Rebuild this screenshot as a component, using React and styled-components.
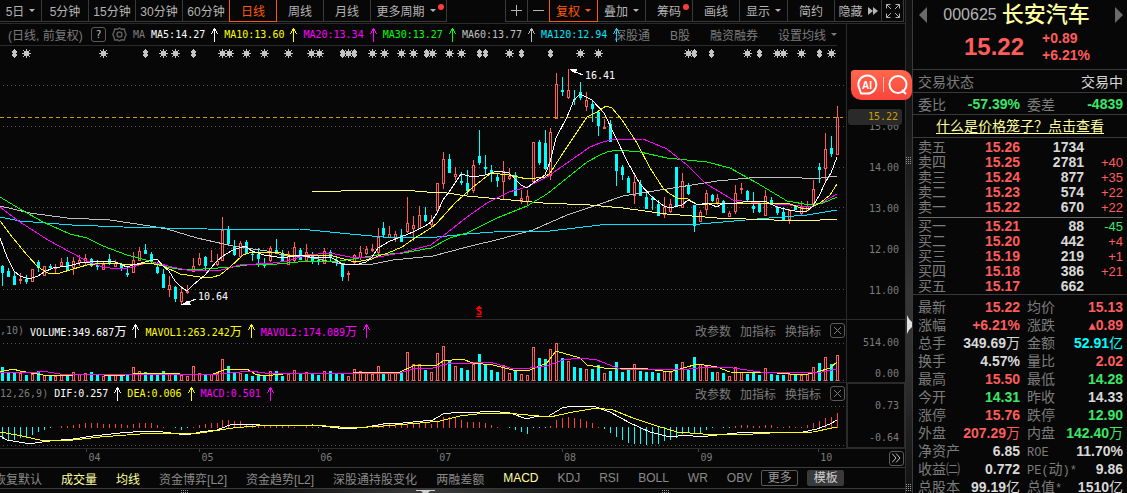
import React from "react";
import styled, { createGlobalStyle, css } from "styled-components";

/* ---------- theme values ---------- */
const C = {
  bg: "#070707",
  line: "#3a3a3a",
  faint: "#2b2b2b",
  text: "#b4b4b4",
  dim: "#7c7c7c",
  red: "#ff5c5c",
  green: "#3ce668",
  cyan: "#00ffff",
  white: "#d8d8d8",
  orange: "#ff5a0a",
  cream: "#ffffa0",
  gold: "#c8a000",
};
const SANS = '"Liberation Sans", "Noto Sans CJK SC", sans-serif';
const MONO = '"DejaVu Sans Mono", "Noto Sans CJK SC", monospace';

const Global = createGlobalStyle`
  * { box-sizing: border-box; }
  body { margin: 0; background: ${C.bg}; font-family: ${SANS}; font-size: 12px; }
  button { font: inherit; color: inherit; background: none; border: 0; padding: 0; margin: 0; white-space: nowrap; cursor: pointer; }
  svg { display: block; }
`;

/* ---------- series data ---------- */
const PLOT_W = 846;
const barX = (i) => Math.floor(2.3 + i * 5.964);

const CANDLE_BLOCKS = [
  [180, `d255,258,278,318 d265,273,288,292 d276,290,312,316 u280,298,301,312 d286,299,303,314 u267,267,304,305 d240,248,262,276 u258,258,286,290 d252,260,262,267 u252,263,265,280
  u234,248,257,260 d232,246,270,270 u233,245,263,285 u225,240,248,258 u222,235,246,260 d235,238,256,262 d240,255,258,270 u248,252,268,270 d224,237,248,255 u242,250,259,262
  d250,252,262,275 d262,280,284,293 u218,240,278,280 u202,213,242,245 d193,210,221,224 d218,222,244,250 d248,262,276,282 d268,282,323,324 u288,315,328,352 d320,322,356,368
  u320,336,364,372 u316,334,338,342 u235,260,273,278 u220,235,253,260 d228,232,256,270 u212,243,245,247 u222,245,252,258 u112,150,242,245 d138,150,191,191 d180,198,223,228
  u185,189,229,232 d180,187,220,224 d212,222,224,245 d205,222,236,262 d236,254,257,265 u198,205,240,248 d178,212,216,222 d210,222,240,247 u215,222,252,257 u186,203,240,248
  d206,210,238,240 u192,217,240,245`],
  [100, `d458,465,480,492 d465,480,484,497 u444,455,490,492 d452,456,470,485 d468,480,488,498 d492,494,530,545 u515,519,524,545 u462,465,487,492 u438,458,472,480 u440,448,460,465
  u432,447,452,458 u384,412,458,462 d366,384,404,412 u378,402,411,415 u394,402,414,428 d388,406,423,425 u292,370,395,400 u348,375,386,425 u318,346,384,388 d321,345,360,368
  u345,361,374,384 u250,250,332,335 u158,178,250,268 d162,177,218,220 u202,222,230,242 d216,243,248,255 d210,250,270,285 u180,196,272,280 d90,168,186,195 d165,202,206,222
  d195,212,218,246 d222,231,242,262 u183,214,245,298 u204,228,236,242 d216,226,287,290 u270,294,303,312 u270,290,305,315 u127,127,245,246 d120,126,188,195 d90,130,206,212
  u84,97,227,242`],
  [60, `u39,73,175,177 d52,90,95,110 u27,90,113,117 d90,117,119,137 d66,96,113,122 u98,122,140,153 d125,132,144,188 d155,158,197,228 u177,203,206,209 d180,194,245,248
  d283,283,332,378 d315,322,342,360 d350,354,397,399 u345,366,407,434 d360,374,406,408 d398,412,446,447 d410,414,419,452 d422,432,465,468 u411,441,462,476 u417,433,455,461
  d321,321,437,438 u339,364,443,446 d370,375,399,405 d435,435,497,518 u450,457,485,487 u390,400,447,465 d402,407,420,427 u402,414,427,435 d422,424,456,459 u453,459,470,473
  u375,399,455,464 u369,384,388,402 d390,394,418,425 d396,440,444,459 d428,431,453,459 u390,408,466,468 d411,420,434,437 d438,442,458,465 d443,456,477,480 u448,451,479,492
  d435,440,447,450 u425,443,460,468 u423,440,450,455 u360,387,430,440 d309,321,329,369 u219,267,326,370 d228,264,279,293 u138,171,284,285`],
];

/* Each block holds offsets in thirds of a pixel below its base line. */
const CANDLES = CANDLE_BLOCKS.flatMap(([base, rows]) =>
  rows.trim().split(/\s+/).map((s) => {
    const [high, top, bottom, low] = s.slice(1).split(",").map((v) => base + Math.floor(Number(v) / 3));
    return { up: s[0] === "u", high, top, bottom, low };
  })
);

const VOLUME = `158 172 173 175 180 178 170 180 182 183 178 180 172 178 174 171 180 183 178 181 180 180 156 168 172 180 178 170 176 178 180 183 153 174 180 178 175 132
153 174 174 178 183 178 180 168 170 183 178 166 176 172 178 180 168 168 175 175 183 162 168 175 178 153 173 175 175 175 112 147 147 165 171 115 93 136
155 161 166 147 118 152 165 171 152 174 168 177 180 97 129 132 103 85 129 139 156 159 162 162 150 174 168 141 171 165 147 168 171 171 174 168 171 147
141 165 126 147 153 171 171 174 183 156 171 177 171 180 159 177 180 180 177 180 180 177 156 144 126 147 121`
  .trim().split(/\s+/).map((v) => 315 + Math.floor(Number(v) / 3));

const MACD = `372 375 375 370 368 360 353 347 341 0 333 333 330 327 324 324 324 327 327 327 327 330 327 324 324 324 330 336 0 341 345 341 336 330 327 324 324 315
315 318 320 327 328 330 332 334 334 334 333 336 0 335 336 341 0 0 341 344 344 341 0 334 334 332 328 327 327 327 325 324 324 324 327 318 306 308
309 315 321 321 321 324 330 336 0 339 347 353 357 341 339 339 333 315 309 306 309 312 318 324 336 342 354 366 375 384 387 387 392 387 387 380 375 369
357 354 357 354 345 341 0 339 339 335 330 330 333 333 330 332 336 336 334 336 336 332 326 318 309 306 294`
  .trim().split(/\s+/).map(Number);

const PRICE_LINES = [
  ["#c0c0c0", "0,206 30,213 67,218 110,220 150,226 167,229 197,238 233,246 267,251 287,256 308,257 337,263 353,265 373,264 393,260 433,256 467,247 500,239 533,230 567,215 600,204 623,196 673,188 717,181 760,177 790,177 813,179 837,176"],
  ["#00e5ff", "0,217 20,221 72,225 123,227 207,229 267,230 300,229 320,231 350,234 383,237 437,237 467,234 507,231 550,231 600,225 610,224 700,224 757,219 807,215 837,210"],
  ["#ffff80", "312,192 370,190 403,190 427,192 447,193 467,196 500,199 543,203 590,205 623,208 667,214 717,218 803,221 837,219"],
  ["#00ff00", "0,197 20,209 43,222 70,234 87,238 103,246 127,255 150,261 167,267 183,270 203,269 233,267 247,265 277,264 308,261 333,262 353,259 377,255 403,253 431,248 450,238 467,233 497,218 527,206 547,194 567,178 587,162 600,155 607,152 617,150 640,152 667,158 707,162 730,168 757,183 787,201 810,205 823,203 837,197"],
  ["#ff00ff", "0,207 20,222 48,240 70,252 87,261 103,267 117,269 128,268 143,264 157,263 172,267 187,270 217,271 240,265 273,263 288,261 306,255 330,253 350,257 373,258 400,253 431,245 443,236 467,217 487,203 509,192 527,187 547,177 567,163 590,147 600,143 610,140 643,139 667,149 687,165 705,183 733,200 760,203 790,205 810,207 823,202 837,194"],
  ["#ffff00", "0,221 13,238 27,255 38,267 48,273 60,273 73,269 87,265 103,263 122,264 133,265 150,263 163,266 180,274 200,277 213,277 220,275 230,267 243,255 252,252 277,252 288,255 308,255 333,256 355,262 372,259 378,256 388,253 402,247 415,238 431,228 437,223 455,203 473,187 491,173 509,175 527,179 545,177 550,173 567,147 577,132 587,117 597,112 606,106 612,108 622,120 637,143 650,168 663,188 670,194 677,198 688,199 698,205 717,203 770,203 790,204 801,208 810,208 820,203 830,195 837,184"],
  ["#ffffff", "0,238 7,257 14,271 20,276 26,278 32,278 38,276 44,272 53,268 60,267 68,266 80,263 90,262 100,261 115,262 127,267 133,265 145,262 157,259 163,266 169,271 175,281 181,287 187,291 193,285 205,275 217,261 223,256 233,250 245,246 252,251 264,255 277,257 288,257 300,255 310,257 330,257 336,260 342,264 355,265 366,262 372,257 378,248 390,241 401,237 413,232 425,226 431,222 437,213 443,200 449,192 455,183 461,174 473,177 485,175 497,171 509,173 515,179 521,185 527,188 533,183 539,179 545,175 550,162 556,138 567,117 574,100 580,94 592,100 604,113 616,138 628,163 640,184 652,197 664,206 670,208 682,205 688,200 698,205 707,203 717,207 723,203 737,203 750,201 765,201 777,207 789,210 801,212 807,211 813,206 819,196 825,183 831,173 837,157"],
];

const VOLUME_LINES = [
  ["#ffff00", "0,372 13,369 20,371 43,375 73,375 90,374 117,376 133,374 157,373 180,374 213,374 227,369 247,369 255,374 263,376 283,374 310,373 353,373 377,372 400,372 413,366 437,365 443,361 462,359 473,363 493,365 517,371 530,370 547,363 556,351 580,358 587,365 610,369 640,368 670,372 683,368 698,364 717,367 730,372 777,373 803,375 817,372 830,368 837,362"],
  ["#ff00ff", "0,372 35,373 42,371 60,374 150,375 220,374 250,371 265,373 300,373 400,373 413,369 433,368 450,363 473,363 490,362 510,368 530,368 547,366 563,360 580,358 597,360 620,369 680,370 707,367 733,368 760,372 817,373 837,369"],
];

const MACD_LINES = [
  ["#ffffff", "0,436 7,440 25,443 35,443 50,441 73,439 93,436 120,433 147,431 163,432 187,435 200,432 217,430 230,425 253,424 267,426 313,425 347,429 367,427 383,424 403,423 413,422 433,420 443,414 460,412 470,413 490,411 510,413 527,419 537,416 547,417 562,408 573,406 593,406 610,412 630,423 650,432 670,437 687,435 699,437 717,435 747,432 803,432 817,429 830,424 837,420"],
  ["#ffff00", "0,432 17,435 40,440 73,440 100,437 140,434 160,433 200,433 233,428 267,425 313,425 353,428 383,426 420,423 440,421 460,416 477,414 497,413 517,414 550,417 573,412 597,408 613,410 633,418 657,426 677,432 703,434 737,435 770,433 813,432 837,427"],
];

const SUNS = [26, 103, 163, 175, 222, 229, 246, 264, 288, 311, 319, 348, 372, 384, 401, 413, 432, 449, 461, 509, 580, 598, 688, 747, 777, 783, 801, 831];
const SPINDLES = [14, 145, 193, 342, 354, 426, 479, 485, 521, 550, 694, 711, 759, 819];

/* ---------- page frame ---------- */
const Page = styled.div`
  display: flex;
  height: 100vh;
  overflow: hidden;
  color: ${C.text};
  background: ${C.bg};
`;
const Workspace = styled.main`
  flex: 1;
  min-width: 0;
  display: flex;
  flex-direction: column;
`;

/* ---------- toolbar ---------- */
const Toolbar = styled.nav`
  display: flex;
  justify-content: space-between;
  padding-right: 1px;
  height: 23px;
  flex: none;
`;
const ToolGroup = styled.div`
  display: flex;
  height: 22px;
`;
const ToolButton = styled.button`
  && {
    position: relative;
    flex: none;
    display: flex;
    align-items: center;
    justify-content: center;
    gap: 5px;
    width: ${(p) => p.$w || 47}px;
    padding-right: ${(p) => p.$inset || 0}px;
    border: solid ${C.line};
    border-width: 0 1px 1px ${(p) => (p.$first ? 1 : 0)}px;
    color: ${C.text};
    ${(p) =>
      p.$active &&
      css`
        border: 1px solid ${C.orange};
        border-top-width: 0;
        color: ${C.orange};
        margin-left: -1px;
      `}
  }
`;
const Caret = styled.span`
  width: 0;
  height: 0;
  border: 3px solid transparent;
  border-top-color: currentColor;
  border-bottom-width: 0;
`;
const Dot = styled.i`
  position: absolute;
  top: 4px;
  right: ${(p) => p.$right}px;
  width: 6px;
  height: 6px;
  border-radius: 50%;
  background: #ff3c3c;
`;

/* ---------- chart panels ---------- */
const Panel = styled.section`
  flex: none;
  display: grid;
  grid-template-columns: minmax(0, 1fr) 59px;
  border-top: 1px solid ${C.faint};
`;
const Plot = styled.div`
  position: relative;
  min-width: 0;
`;
const Legend = styled.header`
  display: flex;
  align-items: center;
  height: 22px;
  padding-right: ${(p) => (p.$ruled ? 0 : 1)}px;
  padding-bottom: ${(p) => (p.$ruled ? 0 : 1)}px;
  margin-right: ${(p) => (p.$ruled ? 9 : 0)}px;
  border-bottom: ${(p) => (p.$ruled ? `1px solid ${C.faint}` : "0")};
  color: ${C.dim};
`;
const Readings = styled.div`
  flex: 1;
  min-width: 0;
  display: flex;
  align-items: center;
  gap: 6px;
  white-space: nowrap;
  font-family: ${MONO};
  font-size: 10px;
`;
const Reading = styled.span`
  display: flex;
  flex: none;
  align-items: center;
  gap: 6px;
  color: ${(p) => p.$color};
`;
const Cjk = styled.span`
  font-size: 12px;
`;
const LegendTitle = styled.span`
  flex: none;
  padding-left: ${(p) => (p.$indent ? 8 : 0)}px;
  min-width: ${(p) => (p.$indent ? 85 : 0)}px;
  font-size: ${(p) => (p.$indent ? 12 : 10)}px;
  font-family: ${(p) => (p.$indent ? SANS : MONO)};
`;
const IconButton = styled.button`
  && {
    width: 15px;
    height: 15px;
    flex: none;
    display: grid;
    place-items: center;
    border: ${(p) => (p.$bare ? "0" : "1px solid #5a5a5a")};
    border-radius: 3px;
    color: ${(p) => p.$color || C.dim};
  }
`;
const LegendActions = styled.div`
  flex: none;
  display: flex;
  align-items: center;
  gap: ${(p) => p.$gap}px;
`;
const CaretButton = styled.button`
  && {
    display: flex;
    align-items: center;
    gap: 5px;
  }
`;
const Axis = styled.div`
  position: relative;
  display: flex;
  flex-direction: column;
  padding: ${(p) => p.$pad};
  justify-content: ${(p) => (p.$spread ? "space-between" : "flex-start")};
  border-left: 1px solid ${C.faint};
  ${(p) => p.$boxed && css`box-shadow: inset 0 0 0 1px ${C.faint};`}
  font-family: ${MONO};
  font-size: 10px;
  text-align: right;
  color: ${C.dim};
`;
const AxisLabel = styled.span`
  height: ${(p) => p.$h}px;
  line-height: ${(p) => p.$h}px;
`;
const PriceTag = styled.output`
  position: absolute;
  top: 85px;
  left: 1px;
  right: 3px;
  height: 16px;
  padding-right: 4px;
  line-height: 16px;
  border-radius: 3px;
  background: #2a2a2a;
  color: ${C.gold};
`;
const PointLabel = styled.span`
  position: absolute;
  left: ${(p) => (p.$x / PLOT_W) * 100}%;
  top: ${(p) => p.$y}px;
  font-family: ${MONO};
  font-size: 10px;
  line-height: 12px;
  color: ${(p) => p.$color || "#fff"};
  font-weight: ${(p) => (p.$bold ? 700 : 400)};
`;
const Assistant = styled.button`
  && {
    position: absolute;
    top: 46px;
    left: 4px;
    width: 61px;
    height: 30px;
    z-index: 2;
    display: flex;
    align-items: center;
    justify-content: center;
    border-radius: 3px 10px 8px 10px;
    background: linear-gradient(#ff684c, #fb443c);
  }
`;

/* ---------- time axis and tabs ---------- */
const TimeAxis = styled.div`
  flex: none;
  display: flex;
  align-items: center;
  height: 19px;
  border-top: 1px solid ${C.faint};
  padding-right: 1px;
`;
const Month = styled.span`
  position: relative;
  flex: ${(p) => p.$days} 1 0;
  padding-left: 2px;
  font-family: ${MONO};
  font-size: 10px;
  line-height: 18px;
  color: ${C.dim};
  ${(p) =>
    p.$tick &&
    css`
      &::before {
        content: "";
        position: absolute;
        left: 0;
        top: 0;
        width: 1px;
        height: 3px;
        background: #444;
      }
    `}
`;
const Tabs = styled.nav`
  flex: none;
  display: flex;
  align-items: center;
  gap: 19px;
  height: 21px;
  overflow: hidden;
  border-top: 1px solid ${C.line};
  color: #8a8a8a;
`;
const Tab = styled.button`
  && {
    flex: none;
    color: ${(p) => (p.$on ? C.cream : "inherit")};
    margin-left: ${(p) => (p.$clipped ? -6 : 0)}px;
  }
`;
const TabActions = styled.div`
  display: flex;
  gap: 9px;
  margin-left: -10px;
`;
const SmallButton = styled.button`
  && {
    width: 37px;
    height: 16px;
    line-height: 14px;
    border: 1px solid ${(p) => (p.$filled ? "#3a3a3a" : "#5a5a5a")};
    border-radius: 2px;
    background: ${(p) => (p.$filled ? "#3a3a3a" : "none")};
    color: ${(p) => (p.$filled ? "#d0d0d0" : "#9a9a9a")};
  }
`;
const Drawer = styled.div`
  flex: 1;
  display: flex;
  align-items: flex-start;
  justify-content: space-between;
  padding: 1px 26% 0 20%;
  border-top: 1px solid ${C.line};
  background: linear-gradient(90deg, #0a0a0a 28%, #3c3c3c 47%, #0a0a0a 70%);
`;

/* ---------- divider ---------- */
const Divider = styled.div`
  flex: none;
  width: 7px;
  display: flex;
  flex-direction: column;
  justify-content: space-between;
  align-items: center;
  padding: 157px 0 1px;
  border-left: 1px solid #303030;
  background: linear-gradient(#101010, #161616 25%, #363636 60%, #303030 75%, #101010);
`;

/* ---------- quote panel ---------- */
const Quote = styled.aside`
  flex: none;
  width: 215px;
  overflow: hidden;
  border-left: 1px solid ${C.line};
`;
const QuoteHead = styled.header`
  height: 69px;
  padding: 0 4px 0 6px;
`;
const NameRow = styled.div`
  display: flex;
  align-items: center;
  justify-content: space-between;
  height: 30px;
`;
const Title = styled.h1`
  display: flex;
  align-items: center;
  gap: 5px;
  margin: 0;
  padding-right: 9px;
  font-size: 22px;
  line-height: 30px;
  font-weight: 500;
  color: ${C.cream};
`;
const Code = styled.span`
  font-size: 16px;
  font-weight: 400;
  color: ${C.text};
`;
const PriceRow = styled.div`
  display: flex;
  align-items: center;
  gap: 18px;
  padding-left: 45px;
  color: ${C.red};
  font-weight: 700;
`;
const Price = styled.strong`
  font-size: 24px;
  line-height: 32px;
`;
const Change = styled.div`
  font-size: 14px;
  line-height: 17px;
`;
const Section = styled.section`
  border-top: 1px solid ${C.line};
  padding: ${(p) => p.$pad || "0 4px 0 5px"};
`;
const Line = styled.div`
  display: grid;
  grid-template-columns: 28px 1fr 35px 68px;
  align-items: center;
  height: ${(p) => p.$h}px;
  font-size: 14px;
`;
const StateLine = styled(Line)`
  grid-template-columns: 1fr auto;
`;
const Label = styled.span`
  color: ${C.dim};
  white-space: nowrap;
  padding-left: ${(p) => (p.$second ? 7 : 0)}px;
`;
const Value = styled.span`
  text-align: right;
  font-weight: ${(p) => (p.$plain ? 400 : 700)};
  color: ${(p) => p.$color || C.white};
`;
const HelpLine = styled.div`
  height: 22px;
  line-height: 22px;
  text-align: center;
  font-size: 14px;
  padding-right: 1px;
`;
const HelpLink = styled.a`
  color: ${C.cream};
  text-decoration: underline;
  text-underline-offset: 2px;
`;
const DataTable = styled.table`
  display: block;
  border-collapse: collapse;
  font-size: 14px;
  tbody {
    display: block;
  }
  tr {
    display: grid;
    align-items: center;
    grid-template-columns: ${(p) => p.$cols};
    height: ${(p) => p.$row}px;
    line-height: ${(p) => p.$row}px;
  }
`;
const Th = styled.th`
  padding: 0 0 0 ${(p) => (p.$second ? 7 : 0)}px;
  font-weight: 400;
  text-align: left;
  white-space: nowrap;
  color: ${C.dim};
`;
const Td = styled.td`
  padding: 0;
  font-weight: 700;
  text-align: right;
  white-space: nowrap;
  color: ${(p) => p.$color || C.white};
`;
const Delta = styled(Td)`
  font-size: 13px;
  font-weight: 400;
`;
const Unit = styled.span`
  font-weight: 400;
`;
const Latin = styled.span`
  font: 12px "Liberation Mono", monospace;
`;
const Rule = styled.hr`
  height: 1px;
  margin: 2px 0 1px;
  border: 0;
  background: #6a6a6a;
`;

/* ---------- small drawings ---------- */
const UpArrow = () => (
  <svg width="7" height="14" viewBox="0 0 7 14" shapeRendering="crispEdges" aria-hidden="true">
    <path d="M3 0h1v14H3zM2 1h3v2H2zM1 3h1v2H1zM5 3h1v2H5zM0 5h1v1H0zM6 5h1v1H6z" fill="currentColor" />
  </svg>
);
const Close = () => (
  <svg width="9" height="9" viewBox="0 0 9 9" stroke="currentColor" aria-hidden="true">
    <path d="M1 1l7 7M8 1l-7 7" />
  </svg>
);
const Gear = () => (
  <svg width="15" height="15" viewBox="0 0 15 15" fill="none" stroke="#5c5c5c" strokeWidth="1.4" strokeLinejoin="round" aria-hidden="true">
    <path d="M7.500 1l1.800 1.200 3-.2.6 2.600L14.200 7.500l-1.300 2.900-.6 2.600-3-.2L7.500 14l-1.800-1.200-3 .2-.6-2.600L.8 7.500l1.300-2.900.6-2.600 3 .2z" />
    <circle cx="7.500" cy="7.500" r="2.500" />
  </svg>
);
const Expand = () => (
  <svg width="14" height="14" viewBox="0 0 14 14" fill="none" stroke="currentColor" aria-hidden="true">
    <path d="M.5 4.500v-4h4M9.500.5h4v4M13.500 9.500v4h-4M4.500 13.500h-4v-4M.5.5l4.500 4.500M13.500.5L9 5M13.500 13.500L9 9M.5 13.500L5 9" />
  </svg>
);
const Forward = () => (
  <svg width="10" height="8" viewBox="0 0 10 8" fill="currentColor" aria-hidden="true">
    <path d="M0 0l5 4-5 4zM5 0l5 4-5 4z" />
  </svg>
);
const Sign = ({ plus }) => (
  <svg width="11" height="11" viewBox="0 0 11 11" fill="currentColor" aria-hidden="true">
    <path d="M0 5h11v1H0z" />
    {plus && <path d="M5 0h1v11H5z" />}
  </svg>
);
const Grip = ({ tall }) => {
  const [w, h] = tall ? [6, 8] : [8, 3];
  const dots = [];
  for (let x = 0; x < w; x += 2) for (let y = 0; y < h; y += 2) dots.push(<rect key={`${x}-${y}`} x={x} y={y} width="1" height="1" />);
  return <svg width={w} height={h} fill="#9a9a9a" shapeRendering="crispEdges" aria-hidden="true">{dots}</svg>;
};
const Triangle = ({ left }) => (
  <svg width="8" height="16" viewBox="0 0 8 16" fill="#6a6a6a" aria-hidden="true">
    <path d={left ? "M8 0v16L0 8z" : "M0 0v16l8-8z"} />
  </svg>
);

/* ---------- chart drawing ---------- */
const Svg = ({ top, height, children, label }) => (
  <svg width="100%" height={height} viewBox={`0 ${top} ${PLOT_W} ${height}`} preserveAspectRatio="none" shapeRendering="crispEdges" role="img" aria-label={label}>
    {children}
  </svg>
);
const Dotted = ({ y }) => <path d={`M3 ${y}.5H${PLOT_W}`} stroke="#555" strokeDasharray="1 3" />;
const Bar = ({ x, y, h, up }) =>
  up ? (
    <>
      <rect x={x - 1} y={y} width="3" height={Math.max(h, 1)} fill={C.red} />
      {h > 2 && <rect x={x} y={y + 1} width="1" height={h - 2} fill={C.bg} />}
    </>
  ) : (
    <rect x={x - 1} y={y} width="3" height={Math.max(h, 1)} fill={C.cyan} />
  );
const Lines = ({ series }) => series.map(([color, pts]) => <polyline key={color} points={pts} fill="none" stroke={color} />);

const PriceChart = () => (
  <Svg top={46} height={273} label="日线">
    {[85, 126, 167, 207, 248, 289].map((y) => <Dotted key={y} y={y} />)}
    {SUNS.map((x) => (
      <path key={x} transform={`translate(${x - 4} 49)`} fill="#c4c4c4" d="M4 0h1v9H4zM0 4h9v1H0zM2 2h5v5H2zM1 1h1v1H1zM7 1h1v1H7zM1 7h1v1H1zM7 7h1v1H7z" />
    ))}
    {SPINDLES.map((x) => (
      <path key={x} transform={`translate(${x - 2} 49)`} fill="#c4c4c4" d="M2 0h1v9H2zM1 1h3v7H1zM0 2h5v2H0zM0 5h5v2H0z" />
    ))}
    {CANDLES.map((c, i) => {
      const x = barX(i);
      return (
        <g key={i}>
          <rect x={x} y={c.high} width="1" height={Math.max(c.low - c.high, 1)} fill={c.up ? C.red : C.cyan} />
          <Bar x={x} y={c.top} h={c.bottom - c.top + 1} up={c.up} />
        </g>
      );
    })}
    <Lines series={PRICE_LINES} />
    <path d="M0 117.500H843" stroke={C.gold} strokeDasharray="4 3" />
    <g stroke="#fff" fill="#fff">
      <path d="M196 299L186 303" />
      <path d="M183 304l5-3 2 3z" />
      <path d="M583 75L573 71" />
      <path d="M570 69l7 0-2 4z" />
    </g>
    <g fill="#f00">
      <path d="M479 305l3 4h-6zM476 316h6v1h-6z" />
    </g>
  </Svg>
);

const VolumeChart = () => (
  <Svg top={342} height={40} label="VOLUME">
    <Dotted y={343} />
    <Dotted y={380} />
    {VOLUME.map((y, i) => <Bar key={i} x={barX(i)} y={y} h={381 - y} up={CANDLES[i]?.up} />)}
    <Lines series={VOLUME_LINES} />
  </Svg>
);

const MacdChart = () => (
  <Svg top={405} height={43} label="MACD">
    <Dotted y={406} />
    <Dotted y={445} />
    {MACD.map((v, i) => {
      if (!v) return null;
      const end = 315 + Math.floor(v / 3);
      const up = v < 338;
      return <rect key={i} x={barX(i)} y={up ? end : 427} width="1" height={up ? Math.max(428 - end, 1) : Math.max(end - 427, 1)} fill={up ? "#ff3c3c" : C.cyan} />;
    })}
    <Lines series={MACD_LINES} />
  </Svg>
);

const IndicatorActions = () => (
  <LegendActions $gap={9}>
    <button>改参数</button>
    <button>加指标</button>
    <button>换指标</button>
    <IconButton aria-label="关闭"><Close /></IconButton>
  </LegendActions>
);

/* ---------- quote data ---------- */
const MA = [
  ["#ffffff", "MA5:14.27"],
  ["#ffff00", "MA10:13.60"],
  ["#ff00ff", "MA20:13.34"],
  ["#00ff00", "MA30:13.27"],
  ["#c0c0c0", "MA60:13.77"],
  ["#00e5ff", "MA120:12.94"],
];
const ASKS = [
  ["卖五", "15.26", "1734", ""],
  ["卖四", "15.25", "2781", "+40"],
  ["卖三", "15.24", "877", "+35"],
  ["卖二", "15.23", "574", "+22"],
  ["卖一", "15.22", "670", "+22"],
];
const BIDS = [
  ["买一", "15.21", "88", "-45"],
  ["买二", "15.20", "442", "+4"],
  ["买三", "15.19", "219", "+1"],
  ["买四", "15.18", "386", "+21"],
  ["买五", "15.17", "662", ""],
];
const STATS = [
  ["最新", "15.22", C.red, "均价", "15.13", C.red],
  ["涨幅", "+6.21%", C.red, "涨跌", "▲0.89", C.red],
  ["总手", "349.69万", C.white, "金额", "52.91亿", C.cyan],
  ["换手", "4.57%", C.white, "量比", "2.02", C.red],
  ["最高", "15.50", C.red, "最低", "14.28", C.green],
  ["今开", "14.31", C.green, "昨收", "14.33", C.white],
  ["涨停", "15.76", C.red, "跌停", "12.90", C.green],
  ["外盘", "207.29万", C.red, "内盘", "142.40万", C.green],
  ["净资产", "6.85", C.white, <Latin>ROE</Latin>, "11.70%", C.white],
  ["收益㈡", "0.772", C.white, <><Latin>PE(</Latin>动<Latin>)*</Latin></>, "9.86", C.white],
  ["总股本", "99.19亿", C.white, <>总值<Latin>*</Latin></>, "1510亿", C.white],
];
const withUnit = (v) => {
  if (v[0] === "▲") return <><Latin>▲</Latin>{v.slice(1)}</>;
  return /[万亿]$/.test(v) ? <>{v.slice(0, -1)}<Unit>{v.slice(-1)}</Unit></> : v;
};
const Book = ({ rows }) => (
  <DataTable $row={15} $cols="28px 1fr 64px 39px">
    <tbody>
      {rows.map(([n, p, v, d]) => (
        <tr key={n}>
          <Th scope="row">{n}</Th>
          <Td $color={C.red}>{p}</Td>
          <Td>{v}</Td>
          <Delta $color={d[0] === "-" ? C.green : C.red}>{d}</Delta>
        </tr>
      ))}
    </tbody>
  </DataTable>
);

export default function App() {
  return (
    <Page>
      <Global />
      <Workspace>
        <Toolbar>
          <ToolGroup>
            <ToolButton $w={42}>5日<Caret /></ToolButton>
            <ToolButton>5分钟</ToolButton>
            <ToolButton>15分钟</ToolButton>
            <ToolButton>30分钟</ToolButton>
            <ToolButton>60分钟</ToolButton>
            <ToolButton $active $w={48}>日线</ToolButton>
            <ToolButton>周线</ToolButton>
            <ToolButton>月线</ToolButton>
            <ToolButton $w={76} $inset={5}>更多周期<Caret /><Dot $right={2} /></ToolButton>
          </ToolGroup>
          <ToolGroup>
            <ToolButton $first $w={23} aria-label="放大"><Sign plus /></ToolButton>
            <ToolButton $w={22} aria-label="缩小"><Sign /></ToolButton>
            <ToolButton $active $w={49}>复权<Caret /></ToolButton>
            <ToolButton $w={48}>叠加<Caret /></ToolButton>
            <ToolButton>筹码<Dot $right={3} /></ToolButton>
            <ToolButton>画线</ToolButton>
            <ToolButton $w={48}>显示<Caret /></ToolButton>
            <ToolButton>简约</ToolButton>
            <ToolButton>隐藏<Forward /></ToolButton>
            <ToolButton $w={22} aria-label="全屏"><Expand /></ToolButton>
          </ToolGroup>
        </Toolbar>

        <Panel>
          <Plot>
            <Legend $ruled>
              <Readings>
                <LegendTitle $indent>(日线, 前复权)</LegendTitle>
                <IconButton $color="#c0c0c0" aria-label="说明">?</IconButton>
                <IconButton $bare aria-label="设置"><Gear /></IconButton>
                <span>MA</span>
                {MA.map(([color, text]) => (
                  <Reading key={text} $color={color}>{text}<UpArrow /></Reading>
                ))}
              </Readings>
              <LegendActions $gap={20}>
                <button>深股通</button>
                <button>B股</button>
                <button>融资融券</button>
                <CaretButton>设置均线<Caret /></CaretButton>
              </LegendActions>
            </Legend>
            <PriceChart />
            <PointLabel $x={198} $y={267}>10.64</PointLabel>
            <PointLabel $x={585} $y={46}>16.41</PointLabel>
            <PointLabel $x={476} $y={282} $color="#f00" $bold>S</PointLabel>
          </Plot>
          <Axis $pad="82px 6px 0 0">
            {["15.00", "14.00", "13.00", "12.00", "11.00"].map((v) => <AxisLabel key={v} $h={41}>{v}</AxisLabel>)}
            <PriceTag>15.22</PriceTag>
            <Assistant aria-label="AI 搜索">
              <svg width="52" height="24" viewBox="0 0 52 24" fill="none" stroke="#fff" strokeWidth="2">
                <path d="M5 20.500H11a9 9 0 1 0-7.500-4.500z" strokeLinejoin="round" />
                <path d="M27.500 4v15" strokeWidth="1" opacity=".6" />
                <circle cx="42" cy="11.500" r="8.500" />
                <path d="M46 17l4 4" />
                <text x="11" y="15.500" fill="#fff" stroke="none" fontFamily="Liberation Sans, sans-serif" fontWeight="700" fontSize="10" textAnchor="middle">AI</text>
              </svg>
            </Assistant>
          </Axis>
        </Panel>

        <Panel>
          <Plot>
            <Legend>
              <Readings>
                <LegendTitle>,10)</LegendTitle>
                <Reading $color="#fff"><span>VOLUME:349.687<Cjk>万</Cjk></span><UpArrow /></Reading>
                <Reading $color="#ff0"><span>MAVOL1:263.242<Cjk>万</Cjk></span><UpArrow /></Reading>
                <Reading $color="#f0f"><span>MAVOL2:174.089<Cjk>万</Cjk></span><UpArrow /></Reading>
              </Readings>
              <IndicatorActions />
            </Legend>
            <VolumeChart />
          </Plot>
          <Axis $spread $pad="17px 6px 2px 0">
            <AxisLabel $h={12}>514.00</AxisLabel>
            <AxisLabel $h={12}>0.00</AxisLabel>
          </Axis>
        </Panel>

        <Panel>
          <Plot>
            <Legend>
              <Readings>
                <LegendTitle>12,26,9)</LegendTitle>
                <Reading $color="#fff">DIF:0.257<UpArrow /></Reading>
                <Reading $color="#ff0">DEA:0.006<UpArrow /></Reading>
                <Reading $color="#f0f">MACD:0.501<UpArrow /></Reading>
              </Readings>
              <IndicatorActions />
            </Legend>
            <MacdChart />
          </Plot>
          <Axis $spread $boxed $pad="17px 6px 4px 0">
            <AxisLabel $h={12}>0.73</AxisLabel>
            <AxisLabel $h={12}>-0.64</AxisLabel>
          </Axis>
        </Panel>

        <TimeAxis>
          <Month $days={86} />
          {[["04", 113], ["05", 119], ["06", 119], ["07", 125], ["08", 137], ["09", 120], ["10", 70]].map(([m, d]) => (
            <Month key={m} $days={d} $tick>{m}</Month>
          ))}
          <IconButton $color="#c0c0c0" aria-label="更多">
            <svg width="9" height="10" viewBox="0 0 9 10" fill="none" stroke="currentColor" aria-hidden="true"><path d="M0 0.500l4 4.500-4 4.500M4 .5l4 4.500-4 4.500" /></svg>
          </IconButton>
        </TimeAxis>

        <Tabs>
          <Tab $clipped>恢复默认</Tab>
          <Tab $on>成交量</Tab>
          <Tab $on>均线</Tab>
          <Tab>资金博弈[L2]</Tab>
          <Tab>资金趋势[L2]</Tab>
          <Tab>深股通持股变化</Tab>
          <Tab>两融差额</Tab>
          <Tab $on>MACD</Tab>
          <Tab>KDJ</Tab>
          <Tab>RSI</Tab>
          <Tab>BOLL</Tab>
          <Tab>WR</Tab>
          <Tab>OBV</Tab>
          <TabActions>
            <SmallButton>更多</SmallButton>
            <SmallButton $filled>模板</SmallButton>
          </TabActions>
        </Tabs>
        <Drawer>
          <Grip />
          <svg width="19" height="3" viewBox="0 0 19 3" fill="#d0d0d0" aria-hidden="true"><path d="M0 0h19v1h-5l-2 2H7L5 1H0z" /></svg>
          <Grip />
        </Drawer>
      </Workspace>

      <Divider>
        <Grip tall />
        <svg width="5" height="19" viewBox="0 0 5 19" fill="#e0e0e0" aria-hidden="true"><path d="M0 0l2 4 3 3v5l-3 3-2 4z" /></svg>
        <Grip tall />
      </Divider>

      <Quote>
        <QuoteHead>
          <NameRow>
            <button aria-label="上一只"><Triangle left /></button>
            <Title><Code>000625</Code>长安汽车</Title>
            <button aria-label="下一只"><Triangle /></button>
          </NameRow>
          <PriceRow>
            <Price>15.22</Price>
            <Change>
              <div>+0.89</div>
              <div>+6.21%</div>
            </Change>
          </PriceRow>
        </QuoteHead>
        <Section>
          <StateLine $h={22}>
            <Label>交易状态</Label>
            <Value $plain>交易中</Value>
          </StateLine>
        </Section>
        <Section>
          <Line $h={21}>
            <Label>委比</Label>
            <Value $color={C.green}>-57.39%</Value>
            <Label $second>委差</Label>
            <Value $color={C.green}>-4839</Value>
          </Line>
        </Section>
        <Section>
          <HelpLine><HelpLink href="#cage">什么是价格笼子？点击查看</HelpLink></HelpLine>
        </Section>
        <Section $pad="2px 4px 0 5px">
          <Book rows={ASKS} />
          <Rule />
          <Book rows={BIDS} />
        </Section>
        <Section $pad="3px 4px 0 5px">
          <DataTable $row={18} $cols="28px 1fr 35px 68px">
            <tbody>
              {STATS.map(([a, av, ac, b, bv, bc]) => (
                <tr key={a}>
                  <Th scope="row">{a}</Th>
                  <Td $color={ac}>{withUnit(av)}</Td>
                  <Th scope="row" $second>{b}</Th>
                  <Td $color={bc}>{withUnit(bv)}</Td>
                </tr>
              ))}
            </tbody>
          </DataTable>
        </Section>
      </Quote>
    </Page>
  );
}
